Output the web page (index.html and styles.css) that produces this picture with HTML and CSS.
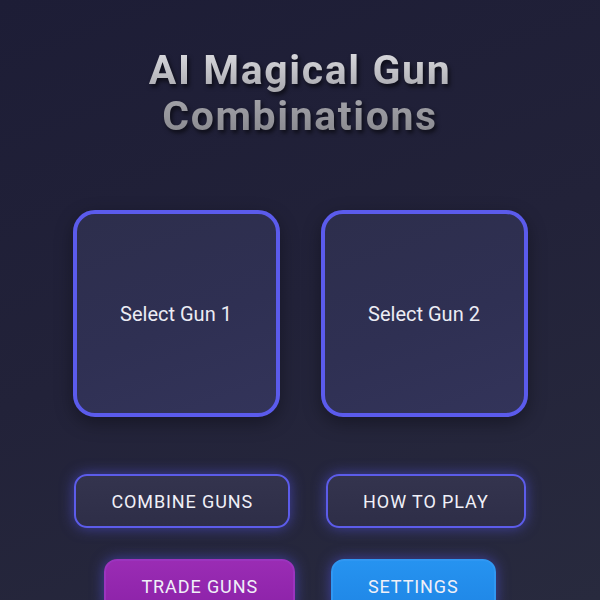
FILE: index.html
```html
<!DOCTYPE html>
<html lang="en">
<head>
    <meta charset="UTF-8">
    <meta name="viewport" content="width=device-width, initial-scale=1.0">
    <title>AI Magical Gun Combinations</title>
    <link rel="stylesheet" href="styles.css">
</head>
<body>
    <div class="container">
        <h1 class="title">AI Magical Gun<br>Combinations</h1>

        <!-- Slots for the two guns -->
        <div class="gun-slots">
            <div class="gun-slot">Select Gun 1</div>
            <div class="gun-slot">Select Gun 2</div>
        </div>

        <div class="menu">
            <button class="menu-btn">Combine Guns</button>
            <button class="menu-btn">How to Play</button>
            <button class="menu-btn trade">Trade Guns</button>
            <button class="menu-btn settings">Settings</button>
        </div>
    </div>
</body>
</html>
```

FILE: styles.css
```css
body {
    margin: 0;
    font-family: Roboto, "Liberation Sans", Arial, sans-serif;
    background: linear-gradient(160deg, #1d1d36 0%, #222239 50%, #282a3e 100%);
    color: #eeeef6;
    height: 100vh;
    overflow: hidden;
}

.container {
    display: flex;
    flex-direction: column;
    align-items: center;
    padding-top: 47px;
}

.title {
    margin: 0;
    font-size: 41px;
    line-height: 46px;
    font-weight: 700;
    letter-spacing: 1.6px;
    text-align: center;
    background: linear-gradient(180deg, #e0e0e4 0%, #a6a6ac 50%, #86868c 100%);
    -webkit-background-clip: text;
    background-clip: text;
    color: transparent;
    filter: drop-shadow(2px 3px 2px rgba(0, 0, 0, 0.6));
}

.gun-slots {
    display: flex;
    gap: 41px;
    margin-top: 71px;
}

.gun-slot {
    width: 207px;
    height: 207px;
    box-sizing: border-box;
    border: 4px solid #5b5bec;
    border-radius: 22px;
    background: linear-gradient(160deg, #2d2e4c 0%, #2f3053 55%, #33345a 100%);
    box-shadow: 0 6px 18px rgba(0, 0, 0, 0.35);
    display: flex;
    justify-content: center;
    align-items: center;
    font-size: 20px;
    color: #ececf4;
}

.menu {
    display: flex;
    flex-wrap: wrap;
    justify-content: center;
    gap: 31px 36px;
    width: 480px;
    margin-top: 57px;
}

.menu-btn {
    font-family: inherit;
    font-size: 18px;
    letter-spacing: 0.9px;
    text-transform: uppercase;
    color: #f0f0f8;
    height: 54px;
    padding: 0 35px;
    border: 2px solid #5c5cea;
    border-radius: 13px;
    background: linear-gradient(180deg, #34344e 0%, #2e2e48 100%);
    box-shadow: 0 0 14px rgba(88, 88, 240, 0.55);
    cursor: pointer;
}

.menu-btn.trade {
    background: linear-gradient(180deg, #9a2cb4 0%, #8c22a8 100%);
    border-color: #9b34be;
}

.menu-btn.settings {
    background: linear-gradient(180deg, #2693f0 0%, #1f86e6 100%);
    border-color: #3097f2;
}
```
